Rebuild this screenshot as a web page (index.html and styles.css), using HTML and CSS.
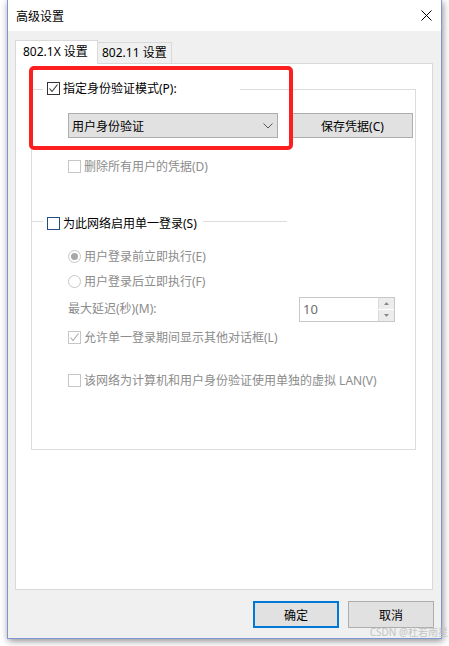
FILE: index.html
```html
<!DOCTYPE html>
<html lang="zh-CN">
<head>
  <meta charset="UTF-8">
  <meta name="viewport" content="width=device-width, initial-scale=1.0">
  <title>高级设置</title>
  <link rel="stylesheet" href="styles.css">
</head>
<body>

  <div class="window">
    <div class="titlebar">
      <span class="title">高级设置</span>
      <svg class="close" width="11" height="11" viewBox="0 0 11 11">
        <path d="M0.5 0.5 L10.5 10.5 M10.5 0.5 L0.5 10.5" stroke="#000" stroke-width="1" fill="none"/>
      </svg>
    </div>

    <div class="client">
      <div class="tabs">
        <div class="tab active">802.1X 设置</div>
        <div class="tab">802.11 设置</div>
      </div>

      <div class="panel">
        <div class="highlight"></div>

        <div class="groups">
          <!-- 身份验证模式 -->
          <div class="legend-row first">
            <span class="rule lead"></span>
            <label class="check legend wide">
              <span class="box checked">
                <svg width="11" height="11" viewBox="0 0 11 11"><path d="M1.5 5.5 L4 8.5 L9.5 1.5" stroke="#333" stroke-width="1.1" fill="none"/></svg>
              </span>指定身份验证模式(P):
            </label>
            <span class="rule fill"></span>
          </div>

          <div class="auth-row">
            <div class="select">
              <span>用户身份验证</span>
              <svg width="10" height="6" viewBox="0 0 10 6"><path d="M0.5 0.5 L5 5 L9.5 0.5" stroke="#555" stroke-width="1" fill="none"/></svg>
            </div>
            <button type="button" class="btn save">保存凭据(C)</button>
          </div>

          <label class="check item disabled delete"><span class="box"></span>删除所有用户的凭据(D)</label>

          <!-- 单一登录 -->
          <div class="legend-row second">
            <span class="rule lead"></span>
            <label class="check legend narrow"><span class="box focus"></span>为此网络启用单一登录(S)</label>
            <span class="rule short"></span>
          </div>

          <label class="check item disabled radio-first"><span class="radio on"></span>用户登录前立即执行(E)</label>
          <label class="check item disabled radio-second"><span class="radio"></span>用户登录后立即执行(F)</label>

          <div class="delay-row">
            <span class="delay-label">最大延迟(秒)(M):</span>
            <div class="spin">
              <span class="spin-value">10</span>
              <div class="spin-btns">
                <span class="spin-btn"><svg width="5" height="3" viewBox="0 0 5 3"><path d="M0 3 L2.5 0 L5 3 Z" fill="#8a8a8a"/></svg></span>
                <span class="spin-btn"><svg width="5" height="3" viewBox="0 0 5 3"><path d="M0 0 L2.5 3 L5 0 Z" fill="#8a8a8a"/></svg></span>
              </div>
            </div>
          </div>

          <label class="check item disabled dialogs">
            <span class="box">
              <svg width="11" height="11" viewBox="0 0 11 11"><path d="M1.5 5.5 L4 8.5 L9.5 1.5" stroke="#a8a8a8" stroke-width="1.1" fill="none"/></svg>
            </span>允许单一登录期间显示其他对话框(L)
          </label>

          <label class="check item disabled vlan"><span class="box"></span>该网络为计算机和用户身份验证使用单独的虚拟 LAN(V)</label>
        </div>
      </div>

      <div class="footer">
        <button type="button" class="btn default">确定</button>
        <button type="button" class="btn">取消</button>
      </div>
    </div>
  </div>

  <div class="watermark">CSDN @杜若南星</div>

</body>
</html>
```

FILE: styles.css
```css
body {
  margin: 0;
  padding: 0;
  background-color: #ffffff;
  font-family: "Noto Sans", "Noto Sans CJK SC", sans-serif;
  font-size: 12px;
  color: #000;
  position: relative;
  height: 646px;
  overflow: hidden;
}
.window {
  margin-left: 7px;
  width: 435px;
  height: 639px;
  box-sizing: border-box;
  border: 1px solid #7b97d4;
  border-top: none;
  background-color: #f0f0f0;
  box-shadow: 1px 2px 7px rgba(0, 0, 0, 0.45);
}
.titlebar {
  height: 31px;
  background-color: #fff;
  display: flex;
  align-items: center;
  justify-content: space-between;
  padding: 0 9px 0 8px;
}
.title {
  line-height: 31px;
  padding-top: 1px;
}
.close {
  display: block;
  margin-top: -1px;
}
.client {
  padding-top: 9px;
}
.tabs {
  display: flex;
  align-items: flex-end;
  height: 23px;
  margin-left: 7px;
}
.tab {
  box-sizing: border-box;
  white-space: nowrap;
}
.tab.active {
  width: 83px;
  height: 24px;
  margin-bottom: -1px;
  padding: 0 7px;
  line-height: 21px;
  background-color: #fff;
  border: 1px solid #d9d9d9;
  border-bottom: none;
  position: relative;
  z-index: 1;
}
.tab:not(.active) {
  width: 74px;
  height: 21px;
  padding-left: 4px;
  line-height: 20px;
  border: 1px solid #d9d9d9;
  border-left: none;
  border-bottom: none;
}
.panel {
  position: relative;
  box-sizing: border-box;
  height: 527px;
  margin: 0 8px 0 7px;
  background-color: #fff;
  border: 1px solid #d9d9d9;
}
.highlight {
  position: absolute;
  left: 13px;
  top: 2px;
  width: 264px;
  height: 84px;
  box-sizing: border-box;
  border: 4px solid #fb1f1f;
  border-radius: 5px;
  z-index: 2;
}
.groups {
  display: flex;
  flex-direction: column;
  margin: 25px 16px 0 15px;
  padding-bottom: 62px;
  border: 1px solid #dcdcdc;
  border-top: none;
}
.legend-row {
  display: flex;
  align-items: flex-start;
  height: 13px;
}
.legend-row.first {
  margin-top: -7px;
}
.legend-row.second {
  margin-top: 44px;
}
.rule {
  height: 1px;
  background-color: #dcdcdc;
}
.first .rule {
  margin-top: 7px;
}
.second .rule {
  margin-top: 4px;
}
.rule.lead {
  width: 11px;
}
.rule.fill {
  flex: 1;
}
.rule.short {
  width: 84px;
}
.check {
  display: flex;
  align-items: center;
  height: 13px;
  line-height: 13px;
  white-space: nowrap;
}
.legend {
  padding-left: 4px;
}
.legend.wide {
  width: 193px;
}
.legend.narrow {
  width: 156px;
}
.item {
  padding-left: 36px;
}
.disabled {
  color: #8c8c8c;
}
.box {
  width: 13px;
  height: 13px;
  box-sizing: border-box;
  border: 1px solid #333;
  background-color: #fff;
  margin-right: 3px;
  display: flex;
  align-items: center;
  justify-content: center;
  flex-shrink: 0;
}
.box svg {
  display: block;
}
.box.focus {
  border-color: #234d7d;
}
.disabled .box {
  border-color: #c6c6c6;
}
.radio {
  width: 13px;
  height: 13px;
  box-sizing: border-box;
  border: 1px solid #c6c6c6;
  border-radius: 50%;
  background-color: #fff;
  margin-right: 3px;
  display: flex;
  align-items: center;
  justify-content: center;
  flex-shrink: 0;
}
.radio.on::after {
  content: '';
  width: 7px;
  height: 7px;
  border-radius: 50%;
  background-color: #a8a8a8;
}
.auth-row {
  display: flex;
  margin-top: 18px;
  padding-left: 36px;
  height: 25px;
}
.select {
  width: 210px;
  box-sizing: border-box;
  background-color: #e1e1e1;
  border: 1px solid #adadad;
  display: flex;
  align-items: center;
  justify-content: space-between;
  padding: 0 4px 0 3px;
}
.btn {
  box-sizing: border-box;
  background-color: #e1e1e1;
  border: 1px solid #adadad;
  font-family: inherit;
  font-size: 12px;
  color: #000;
  padding: 0;
  cursor: pointer;
}
.btn.save {
  width: 121px;
  height: 25px;
  margin-left: 14px;
}
.delete {
  margin-top: 22px;
}
.radio-first {
  margin-top: 20px;
}
.radio-second {
  margin-top: 12px;
}
.delay-row {
  display: flex;
  align-items: center;
  height: 25px;
  margin-top: 9px;
  padding: 0 20px 0 36px;
  color: #8c8c8c;
}
.delay-label {
  margin-top: -3px;
}
.spin {
  margin-left: auto;
  width: 96px;
  height: 25px;
  box-sizing: border-box;
  border: 1px solid #c8c8c8;
  display: flex;
}
.spin-value {
  flex: 1;
  padding-left: 3px;
  line-height: 23px;
  font-size: 13px;
  color: #6d6d6d;
}
.spin-btns {
  width: 16px;
  display: flex;
  flex-direction: column;
  gap: 1px;
  padding: 0;
}
.spin-btn {
  flex: 1;
  background-color: #ececec;
  border-left: 1px solid #dadada;
  display: flex;
  align-items: center;
  justify-content: center;
}
.spin-btn svg {
  display: block;
}
.dialogs {
  margin-top: 9px;
}
.vlan {
  margin-top: 30px;
}
.footer {
  display: flex;
  justify-content: flex-end;
  gap: 9px;
  margin-top: 11px;
  padding-right: 7px;
}
.footer .btn {
  width: 86px;
  height: 27px;
}
.footer .btn.default {
  border: 2px solid #0078d7;
}
.watermark {
  position: absolute;
  right: 1px;
  top: 626px;
  font-size: 10px;
  line-height: 12px;
  color: #c4c4c4;
  white-space: nowrap;
}
```
